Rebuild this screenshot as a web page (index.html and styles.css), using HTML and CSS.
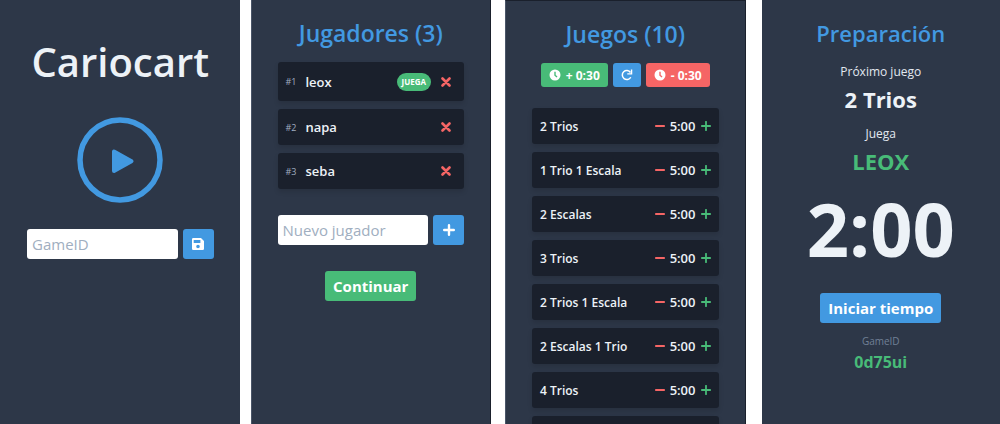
FILE: index.html
```html
<!DOCTYPE html>
<html lang="es">
<head>
<meta charset="utf-8">
<meta name="viewport" content="width=device-width, initial-scale=1">
<title>Cariocart</title>
<link rel="stylesheet" href="styles.css">
</head>
<body>
<svg class="sprite" aria-hidden="true">
  <symbol id="clock" viewBox="0 0 24 24"><path fill-rule="evenodd" d="M12 1a11 11 0 1 0 0 22 11 11 0 0 0 0-22zm-1.400 4.500h2.800v6.300l3.600 3.200-1.900 2.100-4.500-4z"/></symbol>
  <symbol id="redo" viewBox="0 0 24 24"><path d="M19.500 16.500a9 9 0 1 1-.500-9.500" fill="none" stroke="currentColor" stroke-width="3"/><path d="M22.500 1v10h-10v-2.500h7.200V1z"/></symbol>
  <symbol id="cross" viewBox="0 0 10 10"><path d="M1.500 1.500l7 7M8.500 1.500l-7 7" stroke="currentColor" stroke-width="2.600" stroke-linecap="round"/></symbol>
  <symbol id="minus" viewBox="0 0 10 10"><path d="M.800 5h8.400" stroke="currentColor" stroke-width="1.800" stroke-linecap="round"/></symbol>
  <symbol id="plus" viewBox="0 0 10 10"><path d="M.800 5h8.400M5 .800v8.400" stroke="currentColor" stroke-width="1.800" stroke-linecap="round"/></symbol>
  <symbol id="plus-bold" viewBox="0 0 12 12"><path d="M1.200 6h9.600M6 1.200v9.600" stroke="currentColor" stroke-width="2.400" stroke-linecap="round"/></symbol>
  <symbol id="save" viewBox="0 0 12 12"><path fill-rule="evenodd" d="M1.300 0H9l3 3v7.700a1.300 1.300 0 0 1-1.300 1.300H1.300A1.300 1.300 0 0 1 0 10.700V1.300A1.300 1.300 0 0 1 1.300 0zM1.700 1.900v3h6.700v-3zM6 6.700a1.800 1.800 0 1 0 0 3.600 1.800 1.800 0 0 0 0-3.600z"/></symbol>
</svg>
<main class="screens">
  <section class="screen home">
    <h1 class="brand">Cariocart</h1>
    <button class="play" type="button" aria-label="Jugar">
      <svg viewBox="0 0 86 86"><circle cx="43" cy="43" r="40" fill="none" stroke="currentColor" stroke-width="5.500"/><path d="M37 34.500v19.500l17.500-9.700z" fill="currentColor" stroke="currentColor" stroke-width="4" stroke-linejoin="round"/></svg>
    </button>
    <form class="entry">
      <input class="field" type="text" placeholder="GameID" aria-label="GameID">
      <button class="btn blue square" type="button" aria-label="Guardar"><svg class="icon"><use href="#save"/></svg></button>
    </form>
  </section>

  <section class="screen players">
    <h2 class="title">Jugadores (3)</h2>
    <ul class="cards">
      <li class="card turn"><span class="rank">#1</span><span class="name">leox</span><span class="badge">JUEGA</span><button class="tool red-text" type="button" aria-label="Quitar leox"><svg class="icon"><use href="#cross"/></svg></button></li>
      <li class="card"><span class="rank">#2</span><span class="name">napa</span><button class="tool red-text" type="button" aria-label="Quitar napa"><svg class="icon"><use href="#cross"/></svg></button></li>
      <li class="card"><span class="rank">#3</span><span class="name">seba</span><button class="tool red-text" type="button" aria-label="Quitar seba"><svg class="icon"><use href="#cross"/></svg></button></li>
    </ul>
    <form class="entry">
      <input class="field" type="text" placeholder="Nuevo jugador" aria-label="Nuevo jugador">
      <button class="btn blue square" type="button" aria-label="Agregar jugador"><svg class="icon"><use href="#plus-bold"/></svg></button>
    </form>
    <button class="btn green large" type="button">Continuar</button>
  </section>

  <section class="screen games">
    <h2 class="title">Juegos (10)</h2>
    <div class="adjust">
      <button class="btn green small" type="button"><svg class="icon"><use href="#clock"/></svg>+ 0:30</button>
      <button class="btn blue small" type="button" aria-label="Restablecer"><svg class="icon"><use href="#redo"/></svg></button>
      <button class="btn red small" type="button"><svg class="icon"><use href="#clock"/></svg>- 0:30</button>
    </div>
    <ul class="cards">
      <li class="card"><span class="name">2 Trios</span><button class="tool red-text" type="button" aria-label="Menos tiempo"><svg class="icon"><use href="#minus"/></svg></button><span class="time">5:00</span><button class="tool green-text" type="button" aria-label="Más tiempo"><svg class="icon"><use href="#plus"/></svg></button></li>
      <li class="card"><span class="name">1 Trio 1 Escala</span><button class="tool red-text" type="button" aria-label="Menos tiempo"><svg class="icon"><use href="#minus"/></svg></button><span class="time">5:00</span><button class="tool green-text" type="button" aria-label="Más tiempo"><svg class="icon"><use href="#plus"/></svg></button></li>
      <li class="card"><span class="name">2 Escalas</span><button class="tool red-text" type="button" aria-label="Menos tiempo"><svg class="icon"><use href="#minus"/></svg></button><span class="time">5:00</span><button class="tool green-text" type="button" aria-label="Más tiempo"><svg class="icon"><use href="#plus"/></svg></button></li>
      <li class="card"><span class="name">3 Trios</span><button class="tool red-text" type="button" aria-label="Menos tiempo"><svg class="icon"><use href="#minus"/></svg></button><span class="time">5:00</span><button class="tool green-text" type="button" aria-label="Más tiempo"><svg class="icon"><use href="#plus"/></svg></button></li>
      <li class="card"><span class="name">2 Trios 1 Escala</span><button class="tool red-text" type="button" aria-label="Menos tiempo"><svg class="icon"><use href="#minus"/></svg></button><span class="time">5:00</span><button class="tool green-text" type="button" aria-label="Más tiempo"><svg class="icon"><use href="#plus"/></svg></button></li>
      <li class="card"><span class="name">2 Escalas 1 Trio</span><button class="tool red-text" type="button" aria-label="Menos tiempo"><svg class="icon"><use href="#minus"/></svg></button><span class="time">5:00</span><button class="tool green-text" type="button" aria-label="Más tiempo"><svg class="icon"><use href="#plus"/></svg></button></li>
      <li class="card"><span class="name">4 Trios</span><button class="tool red-text" type="button" aria-label="Menos tiempo"><svg class="icon"><use href="#minus"/></svg></button><span class="time">5:00</span><button class="tool green-text" type="button" aria-label="Más tiempo"><svg class="icon"><use href="#plus"/></svg></button></li>
      <li class="card"></li>
    </ul>
  </section>

  <section class="screen prep">
    <h2 class="title">Preparación</h2>
    <p class="caption">Próximo juego</p>
    <p class="value">2 Trios</p>
    <p class="caption">Juega</p>
    <p class="value green-text">LEOX</p>
    <p class="countdown">2:00</p>
    <button class="btn blue large" type="button">Iniciar tiempo</button>
    <p class="id-label">GameID</p>
    <p class="id-value green-text">0d75ui</p>
  </section>
</main>
</body>
</html>
```

FILE: styles.css
```css
* { box-sizing: border-box; }
body {
  margin: 0;
  background: #fff;
  color: #edf2f7;
  font-family: "Open Sans", "Noto Sans", sans-serif;
}
h1, h2, p, ul { margin: 0; padding: 0; }
ul { list-style: none; }
button, input { font: inherit; margin: 0; border: 0; }
button { padding: 0; background: none; color: inherit; cursor: pointer; }
.sprite { display: none; }
.icon { display: block; width: 12px; height: 12px; fill: currentColor; flex: none; }

.screens { display: flex; height: 100vh; overflow: hidden; }
.screen {
  flex: 1 1 0;
  min-width: 0;
  display: flex;
  flex-direction: column;
  align-items: center;
  padding: 16px 26px 0;
  background: #2d3748;
  overflow: hidden;
}
.home { padding: 32px 26px 0 27px; }
.players { margin-left: 11px; }
.games { margin-left: 14px; border-top: 1px solid #1a202c; }
.players, .games { border-left: 1px solid #4a5568; border-right: 1px solid #1a202c; }
.prep { margin-left: 16px; }

.brand { font-size: 40px; line-height: 60px; font-weight: 600; }
.play { width: 86px; height: 86px; margin-top: 25px; color: #4299e1; }
.play svg { display: block; width: 100%; height: 100%; }
.title { font-size: 23px; line-height: 34px; font-weight: 600; color: #4299e1; white-space: nowrap; }
.prep .title { font-size: 22px; }

.entry { display: flex; gap: 5px; width: 100%; margin-top: 26px; }
.field {
  flex: 1;
  min-width: 0;
  height: 30px;
  padding: 0 5px;
  border-radius: 3px;
  background: #fff;
  color: #2d3748;
  font-size: 15px;
}
.field::placeholder { color: #a0aec0; opacity: 1; }

.btn {
  display: flex;
  align-items: center;
  justify-content: center;
  border-radius: 3px;
  color: #fff;
  font-weight: 700;
  white-space: nowrap;
}
.blue { background: #4299e1; }
.green { background: #48bb78; }
.red { background: #f56565; }
.red-text { color: #f56565; }
.green-text { color: #48bb78; }
.square { width: 31px; height: 30px; }
.large { height: 30px; padding: 0 8px; font-size: 15px; }
.small { height: 24px; gap: 5px; padding: 0 8px; font-size: 12px; }

.cards { display: flex; flex-direction: column; gap: 8px; width: 100%; }
.card {
  display: flex;
  align-items: center;
  flex: none;
  height: 36px;
  padding: 0 8px;
  border-radius: 3px;
  background: #1a202c;
  box-shadow: 0 3px 5px rgba(0, 0, 0, 0.12);
  font-size: 12px;
  font-weight: 600;
  white-space: nowrap;
}
.name { flex: 1; }
.tool .icon { width: 10px; height: 10px; }
.time { padding: 0 5px; font-size: 13px; }

.players .cards { margin-top: 12px; }
.players .card { padding-right: 13px; font-size: 13px; }
.players .turn { height: 39px; }
.card .rank { margin-right: 9px; color: #a0aec0; font-size: 9px; font-weight: 400; }
.badge {
  margin-right: 10px;
  padding: 0 5px;
  border-radius: 9px;
  background: #48bb78;
  color: #fff;
  font-size: 8px;
  line-height: 18px;
  font-weight: 700;
}
.players .large { margin-top: 26px; }

.adjust { display: flex; gap: 5px; margin-top: 12px; }
.games .cards { margin-top: 21px; }

.caption { margin-top: 11px; font-size: 12px; line-height: 16px; color: #e2e8f0; }
.title + .caption { margin-top: 14px; }
.value { margin-top: 3px; font-size: 22px; line-height: 32px; font-weight: 700; }
.countdown { margin-top: 12px; font-size: 74px; line-height: 80px; font-weight: 700; }
.prep .large { margin-top: 24px; }
.id-label { margin-top: 11px; color: #718096; font-size: 10px; line-height: 14px; }
.id-value { margin-top: 4px; font-size: 16px; line-height: 20px; font-weight: 700; }
```
